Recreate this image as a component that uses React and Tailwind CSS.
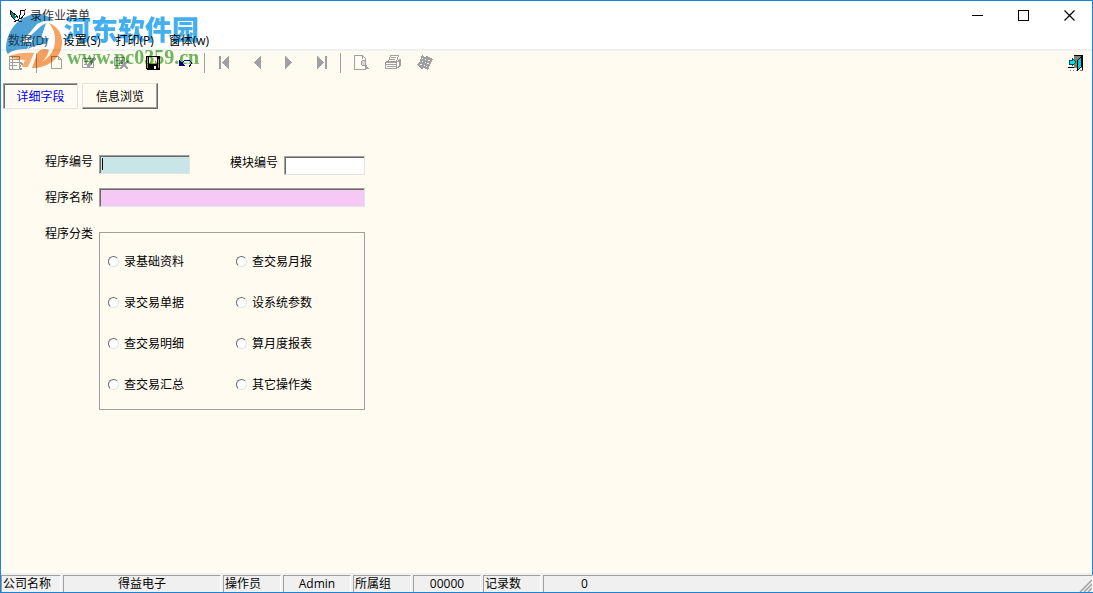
import React from "react";

const FONT = "font-['Open_Sans','Noto_Sans_CJK_SC',sans-serif]";

const categories = [
  "录基础资料", "查交易月报",
  "录交易单据", "设系统参数",
  "查交易明细", "算月度报表",
  "查交易汇总", "其它操作类",
];

const statusCells = [
  { text: "公司名称", cls: "w-[60px] pl-px" },
  { text: "得益电子", cls: "w-[158px] text-center" },
  { text: "操作员", cls: "w-[58px] pl-px" },
  { text: "Admin", cls: "w-[68px] text-center" },
  { text: "所属组", cls: "w-[58px] pl-px" },
  { text: "00000", cls: "w-[68px] text-center" },
  { text: "记录数", cls: "w-[58px] pl-px" },
  { text: "0", cls: "flex-1 pl-[37px]" },
];

function Icon({ children, label }) {
  return (
    <svg width="16" height="16" viewBox="0 0 16 16" shapeRendering="crispEdges" role="img" aria-label={label}>
      {children}
    </svg>
  );
}

function ToolButton({ label, className = "", children }) {
  return (
    <button type="button" title={label} className={"flex h-4 w-4 shrink-0 items-center justify-center " + className}>
      <Icon label={label}>{children}</Icon>
    </button>
  );
}

function Separator({ className = "" }) {
  return <span className={"h-5 w-px shrink-0 bg-[#a0a0a0] " + className} />;
}

function BirdIcon() {
  return (
    <svg width="18" height="16" viewBox="0 0 18 16" shapeRendering="crispEdges" aria-hidden="true">
      <path d="M1 2l3 3 2 1 1 3-2 2-3-3z" fill="#0b8a7a" />
      <path d="M1 2v3l2 4 3 3h3l3-3 1-3M1 2l3 3 3 2 2 3" fill="none" stroke="#111" />
      <path d="M12 2l2 1 2-1-1 5-3 4-2-1 1-3z" fill="#fff" stroke="#111" />
      <path d="M5 14l3-2 2 1 3 1" fill="none" stroke="#111" />
      <path d="M15 3h1v2h-1z" fill="#c33" />
    </svg>
  );
}

function Watermark() {
  return (
    <div className="pointer-events-none absolute left-1 top-2 flex select-none mix-blend-multiply" aria-hidden="true">
      <svg className="mt-0.5 shrink-0" width="58" height="58" viewBox="0 0 58 58">
        <path d="M1 36C2 20 13 5 31 3c7 0 13 2 18 7-6-1-12 0-17 3L17 31h9l-4 7C14 38 7 39 3 43 1 41 1 39 1 36z" fill="#2f92cf" fillOpacity="0.85" />
        <path d="M36 15l5-3-5 15h8l-3 6c-6 0-13 2-18 5l5-10h-6z" fill="#2f92cf" fillOpacity="0.85" />
        <path d="M44 12c8 3 13 10 13 19 0 13-9 23-25 26h-5l5-14c2-5 8-6 12-4-1 5-4 9-7 12 8-5 13-12 13-22 0-7-2-12-6-17z" fill="#f59245" fillOpacity="0.85" />
        <path d="M4 45c8-3 17-4 25-3l-6 14h-6l3-7c-6 0-11-1-16-4z" fill="#f59a50" fillOpacity="0.8" />
      </svg>
      <div className="ml-px flex flex-col">
        <span className="h-9 whitespace-nowrap font-['Noto_Sans_CJK_SC',sans-serif] text-[27px] font-black leading-[40px] text-[#43aef0]">
          河东软件园
        </span>
        <span className="whitespace-nowrap pl-[3px] font-['Liberation_Serif',serif] text-[20px] font-bold leading-6 text-[#52ad48]/85">
          www.pc0359.cn
        </span>
      </div>
    </div>
  );
}

function TitleBar() {
  return (
    <header className="flex h-[29px] items-center bg-white pl-2">
      <BirdIcon />
      <h1 className="ml-[3px] flex-1 text-xs text-[#333333]">录作业清单</h1>
      <div className="flex">
        <button type="button" aria-label="最小化" className="flex h-7 w-[46px] items-center justify-center">
          <svg width="11" height="11" shapeRendering="crispEdges"><path d="M0 5.5h11" stroke="#000" /></svg>
        </button>
        <button type="button" aria-label="最大化" className="flex h-7 w-[46px] items-center justify-center">
          <svg width="11" height="11" shapeRendering="crispEdges"><path d="M.5.5h10v10H.5z" fill="none" stroke="#000" /></svg>
        </button>
        <button type="button" aria-label="关闭" className="flex h-7 w-[46px] items-center justify-center">
          <svg width="11" height="11"><path d="M.5.5l10 10M10.5.5l-10 10" stroke="#000" strokeWidth="1.2" /></svg>
        </button>
      </div>
    </header>
  );
}

function MenuBar() {
  return (
    <nav className="flex h-[21px] items-end gap-[15px] border-b-2 border-[#f0f0f0] bg-white pl-[7px] text-xs text-black">
      <button type="button" className="text-[#5d5d5d]">数据(D)</button>
      <button type="button">设置(S)</button>
      <button type="button">打印(P)</button>
      <button type="button">窗体(w)</button>
    </nav>
  );
}

function Toolbar() {
  return (
    <div className="flex h-[26px] items-center pb-0.5 pl-[7px] pr-2">
      <ToolButton label="列表">
        <path d="M1.5 1.5h10v13h-10zM4.5 1v13M2 4.5h9M2 7.5h8M2 10.5h7" fill="none" stroke="#a0a0a0" />
        <path d="M10 7h4v1h1v2h-2v2h-1v-2h1V9h-1V8h-2zM12 13h2v2h-2z" fill="#a0a0a0" />
      </ToolButton>
      <Separator className="ml-3" />
      <ToolButton label="新增" className="ml-3">
        <path d="M2.5 1.5h7l3 3v9h-10zM9.5 1.5v3h3" fill="none" stroke="#a0a0a0" />
      </ToolButton>
      <ToolButton label="修改" className="ml-4">
        <path d="M1.5 3.5h11v9h-11zM3 6.500h8M3 9.500h6" fill="none" stroke="#a0a0a0" />
        <path d="M13 2l2 2-7 9H6v-3z" fill="#a0a0a0" />
      </ToolButton>
      <ToolButton label="删除" className="ml-4">
        <path d="M1.500 2.500h10v8h-10zM3 5.500h7M6.500 3v7" fill="none" stroke="#a0a0a0" />
        <path d="M7 6l8 8M15 6l-8 8" stroke="#a0a0a0" strokeWidth="2" />
      </ToolButton>
      <ToolButton label="保存" className="ml-4">
        <path d="M1 1h14v14H2l-1-1z" fill="#000" />
        <path d="M4 2h8v6H4z" fill="#fff8e8" />
        <path d="M2 2h1v11H2zM13 4h1v9h-1zM4 8h8v1H4z" fill="#a2a51b" />
        <path d="M9 11h2v3H9z" fill="#fff" />
      </ToolButton>
      <ToolButton label="撤销" className="ml-4">
        <path d="M2 5v6h6L6 9 4 7z" fill="#000080" />
        <path d="M5 8l2-2 2-1h3l2 2v2l-2 3" fill="none" stroke="#000080" />
      </ToolButton>
      <Separator className="ml-[11px]" />
      <ToolButton label="首条" className="ml-3">
        <path d="M2 1h2v13H2zM12 1v13L5 8V7z" fill="#a0a0a0" />
      </ToolButton>
      <ToolButton label="上一条" className="ml-4">
        <path d="M12 1v13L5 8V7z" fill="#a0a0a0" />
      </ToolButton>
      <ToolButton label="下一条" className="ml-4">
        <path d="M4 1v13l7-6V7z" fill="#a0a0a0" />
      </ToolButton>
      <ToolButton label="末条" className="ml-4">
        <path d="M4 1v13l7-6V7zM12 1h2v13h-2z" fill="#a0a0a0" />
      </ToolButton>
      <Separator className="ml-[11px]" />
      <ToolButton label="预览" className="ml-3">
        <path d="M1.500.500h8l3 3v11h-11zM9.500 1v3" fill="none" stroke="#a0a0a0" />
        <path d="M9.500 5.500h2l1 1v3l-1 1h-2l-1-1v-3z" fill="#d8d5ce" stroke="#a0a0a0" />
        <path d="M12 10l3 4" stroke="#a0a0a0" strokeWidth="2" />
      </ToolButton>
      <ToolButton label="打印" className="ml-4">
        <path d="M5.500.500h8l-2 6h-8zM6 2.500h5M5 4.500h5M.500 7.500h11v6H.500zM.500 7.500l3-2M11.500 7.500l4-3v6l-4 3M1 9.500h10M2 11.500h9M14 4v7" fill="none" stroke="#a0a0a0" />
      </ToolButton>
      <ToolButton label="计算" className="ml-4">
        <path d="M5 0l3 2 2-1 6 3-2 4-3 7-4-2-2 1-5-4 3-4z" fill="#a0a0a0" />
        <path d="M5 3h1M8 4h1M11 5h2M5 6h1M8 7h1M10 8h2M3 9h2M7 10h1M9 11h1" stroke="#fffbf0" />
      </ToolButton>
      <ToolButton label="退出" className="ml-auto">
        <path d="M6 1h9v12H6z" fill="#808080" />
        <path d="M6 0h9v1H6zM14 1h1v14h-1zM0 12h6v1H0z" fill="#000" />
        <path d="M13.500 1.500v10l-4 4v-10z" fill="#00cfcf" stroke="#000" />
        <path d="M1 5h3V3l4 4-4 4V9H1z" fill="#00e5e5" stroke="#004c4c" />
        <path d="M2 15h1M5 15h1M8 15h1M12 15h3" stroke="#808080" />
      </ToolButton>
    </div>
  );
}

const sunken =
  "border border-b-[#e3e3e3] border-l-[#a0a0a0] border-r-[#e3e3e3] border-t-[#a0a0a0] shadow-[inset_1px_1px_0_#696969] px-0.5 text-xs outline-none ";

export default function App() {
  return (
    <div className={"relative flex min-h-screen flex-col border border-[#1883d7] bg-[#fffbf0] text-xs leading-4 text-black " + FONT}>
      <TitleBar />
      <MenuBar />
      <Toolbar />

      <div role="tablist" className="flex gap-1 pl-0.5 pt-1.5">
        <button type="button" role="tab" aria-selected="true" className="h-[26px] w-[75px] border border-b-[#e3e3e3] border-l-[#a0a0a0] border-r-[#e3e3e3] border-t-[#a0a0a0] pt-0.5 text-[#0000ff] shadow-[inset_1px_1px_0_#696969]">
          详细字段
        </button>
        <button type="button" role="tab" aria-selected="false" className="h-[26px] w-[76px] border border-b-[#696969] border-l-[#e3e3e3] border-r-[#696969] border-t-[#e3e3e3] pt-0.5 shadow-[inset_-1px_-1px_0_#a0a0a0]">
          信息浏览
        </button>
      </div>

      <main className="flex-1 pl-11 pt-[46px]">
        <form className="flex w-80 flex-col">
          <div className="flex items-start">
            <label htmlFor="code" className="w-[54px] shrink-0 pt-px leading-3">程序编号</label>
            <div className="relative flex">
              <input id="code" type="text" placeholder=" " autoFocus className={sunken + "peer h-[19px] w-[91px] bg-[#c8e6e6]"} />
              <span className="pointer-events-none absolute left-[3px] top-[3px] hidden h-3 w-px bg-black peer-placeholder-shown:block" />
            </div>
            <label htmlFor="module" className="ml-10 w-[54px] shrink-0 pt-0.5 leading-3">模块编号</label>
            <input id="module" type="text" className={sunken + "mt-px h-[19px] w-[81px] bg-white"} />
          </div>
          <div className="mt-[13px] flex items-start">
            <label htmlFor="name" className="w-[54px] shrink-0 pt-1 leading-3">程序名称</label>
            <input id="name" type="text" className={sunken + "h-[19px] min-w-0 flex-1 bg-[#f5c8f5]"} />
          </div>
          <div role="radiogroup" aria-labelledby="category" className="mt-5 flex items-start">
            <span id="category" className="w-[54px] shrink-0 pt-px leading-3">程序分类</span>
            <div className="mt-[5px] grid flex-1 grid-cols-2 gap-y-[25px] border border-[#a0a0a0] pb-[17px] pl-2 pt-5">
              {categories.map((name) => (
                <label key={name} className="flex h-4 items-center gap-[5px]">
                  <input
                    type="radio"
                    name="category"
                    className="h-[11px] w-[11px] appearance-none rounded-full border border-b-[#e3e3e3] border-l-[#696969] border-r-[#e3e3e3] border-t-[#696969] bg-white checked:bg-black"
                  />
                  <span className="pt-0.5">{name}</span>
                </label>
              ))}
            </div>
          </div>
        </form>
      </main>

      <footer className="flex items-stretch gap-0.5 border-t-2 border-[#f0f0f0] bg-[#f0f0f0]">
        {statusCells.map((cell) => (
          <div key={cell.text} className={"h-[17px] border-l border-r border-t border-l-[#a0a0a0] border-r-white border-t-[#a0a0a0] leading-4 " + cell.cls}>
            {cell.text}
          </div>
        ))}
        <svg className="-ml-4 mt-1 shrink-0" width="13" height="13" aria-hidden="true">
          <path d="M1 13L13 1M5 13l8-8M9 13l4-4" stroke="#a0a0a0" strokeWidth="1.500" />
        </svg>
      </footer>

      <Watermark />
    </div>
  );
}
